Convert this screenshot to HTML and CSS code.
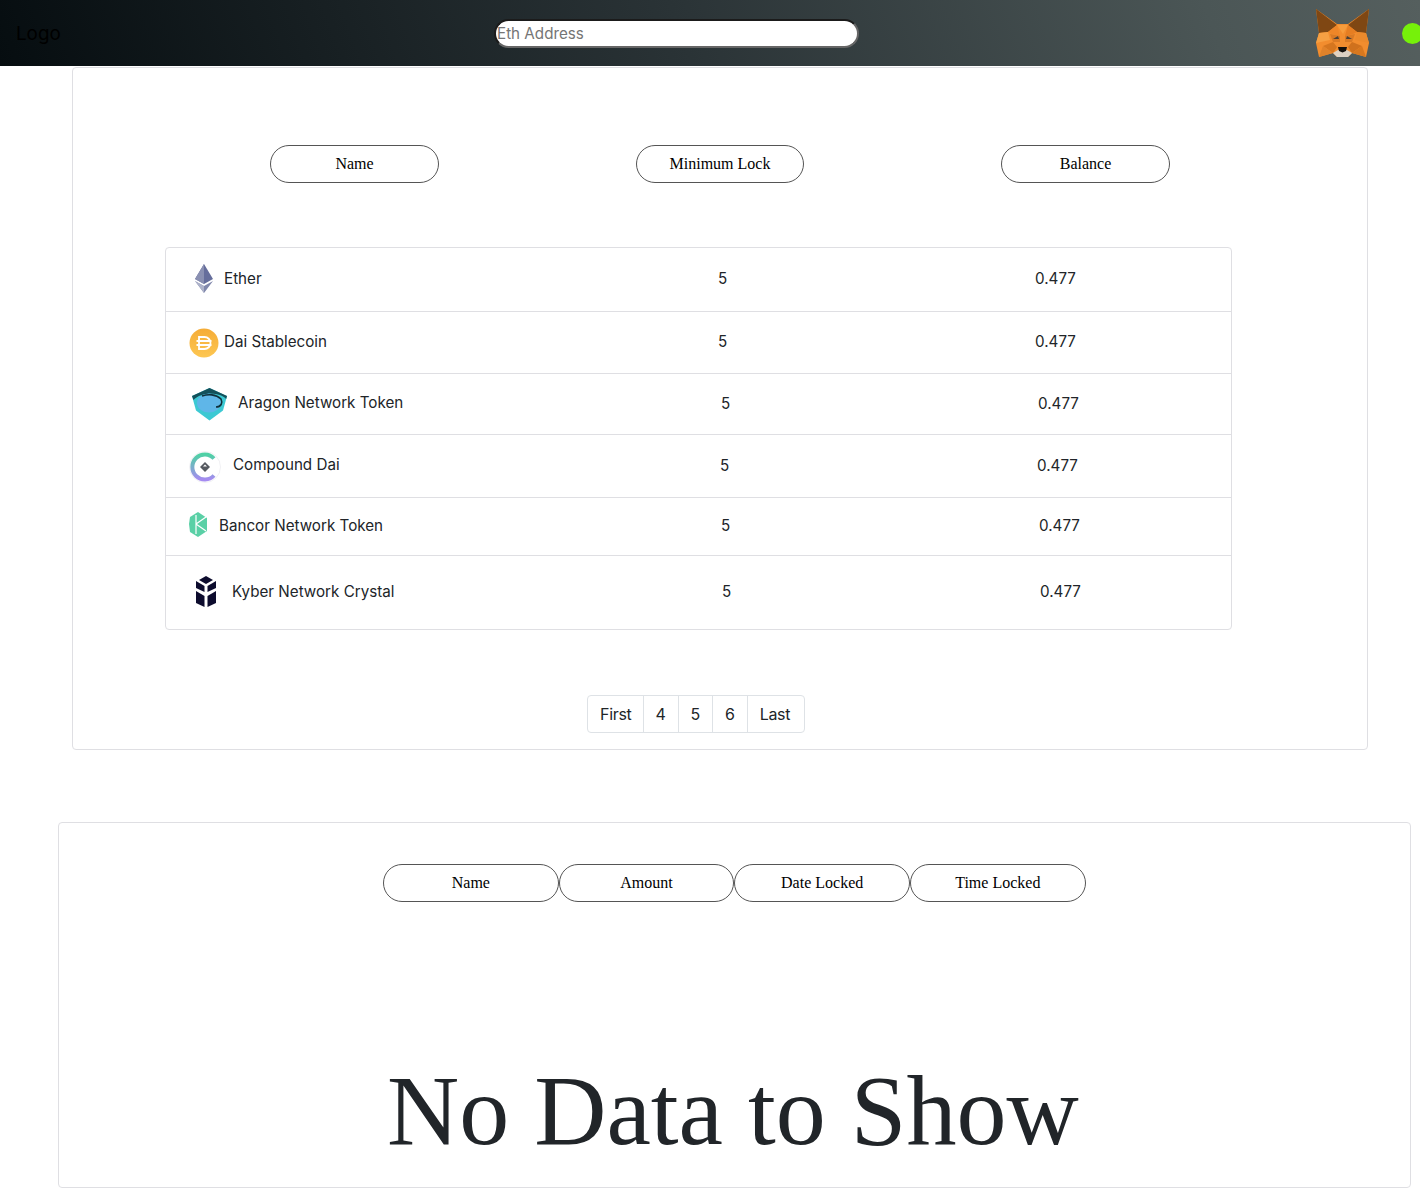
FILE: index.html
```html
<!DOCTYPE html>
<html lang="en">
<head>
  <meta charset="UTF-8">
  <title>Token Lock</title>
  <link rel="stylesheet" href="styles.css">
</head>
<body>
  <header class="topbar">
    <div class="logo">Logo</div>
    <input class="address" type="text" placeholder="Eth Address">
    <svg class="fox" viewBox="0 0 53 48" aria-hidden="true">
      <polygon points="0,0 21,15 32,15 53,0 50,24 53,34 50,48 36,44 32,48 21,48 17,44 3,48 0,34 3,24" fill="#f28d2e"/>
      <polygon points="0,0 21,16 12,23 3,24" fill="#7f4713"/>
      <polygon points="53,0 32,16 41,23 50,24" fill="#7f4713"/>
      <polygon points="21,16 32,16 27,25" fill="#f79c3c"/>
      <polygon points="12,23 21,16 24,27 16,25" fill="#ee8628"/>
      <polygon points="41,23 32,16 29,27 37,25" fill="#e67e22"/>
      <polygon points="14,25 24,27 24,33 17,33" fill="#d97a25"/>
      <polygon points="39,25 29,27 29,33 36,33" fill="#d97a25"/>
      <polygon points="17,30 22,27 23,30" fill="#4c4036"/>
      <polygon points="36,30 31,27 30,30" fill="#4c4036"/>
      <polygon points="3,24 12,23 14,31 0,34" fill="#f6a043"/>
      <polygon points="50,24 41,23 39,31 53,34" fill="#ec8a2c"/>
      <polygon points="7,37 17,33 21,38 17,44" fill="#d5761f"/>
      <polygon points="46,37 36,33 32,38 36,44" fill="#cf711d"/>
      <polygon points="3,48 7,37 17,44" fill="#e0822a"/>
      <polygon points="50,48 46,37 36,44" fill="#d8781f"/>
      <polygon points="17,44 22,41 31,41 36,44 32,48 21,48" fill="#ddd1c3"/>
      <polygon points="22,38 31,38 30,42 26.500,43.500 23,42" fill="#15110d"/>
    </svg>
    <span class="status"></span>
  </header>

  <section class="panel tokens">
    <div class="pills">
      <button class="pill">Name</button>
      <button class="pill">Minimum Lock</button>
      <button class="pill">Balance</button>
    </div>

    <div class="list">
      <div class="row row-ether">
        <div class="name">
          <svg class="icon" viewBox="0 0 30 30" aria-hidden="true">
            <polygon points="15,0 24,15 15,20 6,15" fill="#666e9c"/>
            <polygon points="15,0 15,20 6,15" fill="#8a90b2"/>
            <polygon points="6,17 15,22 24,17 15,29" fill="#8188ac"/>
            <polygon points="6,17 15,22 15,29" fill="#aeb3ca"/>
          </svg>
          <span>Ether</span>
        </div>
        <div class="cell">5</div>
        <div class="cell">0.477</div>
      </div>
      <div class="row row-dai">
        <div class="name">
          <svg class="icon" viewBox="0 0 30 30" aria-hidden="true">
            <defs><linearGradient id="daiFill" x1="0" y1="0" x2="0" y2="1"><stop offset="0" stop-color="#f5ac37"/><stop offset="1" stop-color="#fdc752"/></linearGradient></defs>
            <circle cx="15" cy="15" r="14.5" fill="url(#daiFill)"/>
            <path d="M10 9h5.500a6 6 0 0 1 0 12H10zM7.500 13h15M7.500 17h15" fill="none" stroke="#fff" stroke-width="1.800"/>
          </svg>
          <span>Dai Stablecoin</span>
        </div>
        <div class="cell">5</div>
        <div class="cell">0.477</div>
      </div>
      <div class="row row-aragon">
        <div class="name">
          <svg class="icon" viewBox="0 0 36 33" aria-hidden="true">
            <path d="M17.500 0L35 8l-4 14.500-13.500 10L4 22.500 0 8z" fill="#3cc9d3"/>
            <path d="M17.500 0L35 8l-.8 3C28 4 9 4 1.500 12L0 8z" fill="#14505a"/>
            <ellipse cx="17" cy="15" rx="12" ry="9.500" fill="#5fb6e8"/>
            <path d="M10 8c6-2 14-2 19 3 2 4 0 8-5 8" fill="none" stroke="#10303a" stroke-width="1.600"/>
          </svg>
          <span>Aragon Network Token</span>
        </div>
        <div>5</div>
        <div>0.477</div>
      </div>
      <div class="row row-compound">
        <div class="name">
          <svg class="icon" viewBox="0 0 32 32" aria-hidden="true">
            <defs><linearGradient id="cdaiRing" x1="0" y1="0" x2="0" y2="1"><stop offset="0" stop-color="#4fd1a5"/><stop offset="1" stop-color="#a58bf0"/></linearGradient></defs>
            <circle cx="16" cy="16" r="15.500" fill="#fff" stroke="#f1f1f4"/>
            <path d="M25 7.500A12.500 12.500 0 1 0 25 24.500" fill="none" stroke="url(#cdaiRing)" stroke-width="4"/>
            <polygon points="16,11 21,16 16,21 11,16" fill="#55595f"/>
            <polygon points="16,13.500 18,15.500 14,15.500" fill="#fff"/>
          </svg>
          <span>Compound Dai</span>
        </div>
        <div>5</div>
        <div>0.477</div>
      </div>
      <div class="row row-bancor">
        <div class="name">
          <svg class="icon" viewBox="0 0 19 25" aria-hidden="true">
            <polygon points="9,0 18,6 18,19 9,25 1,20 0,12 1,5" fill="#5ad0a6"/>
            <path d="M7 3v19M7 12l10-7M7 12l10 7" fill="none" stroke="#fff" stroke-width="1.200"/>
          </svg>
          <span>Bancor Network Token</span>
        </div>
        <div class="cell">5</div>
        <div class="cell">0.477</div>
      </div>
      <div class="row row-kyber">
        <div class="name">
          <svg class="icon" viewBox="0 0 22 32" aria-hidden="true">
            <polygon points="11,0 18,4 11,8 4,4" fill="#0d0c2e"/>
            <polygon points="1,5 9.500,10 9.500,16 1,12" fill="#0d0c2e"/>
            <polygon points="21,5 12.500,10 12.500,16 21,12" fill="#0d0c2e"/>
            <polygon points="1,15 9.500,20 9.500,31 1,27" fill="#0d0c2e"/>
            <polygon points="21,15 12.500,20 12.500,31 21,27" fill="#0d0c2e"/>
          </svg>
          <span>Kyber Network Crystal</span>
        </div>
        <div class="cell">5</div>
        <div class="cell">0.477</div>
      </div>
    </div>

    <nav class="pager">
      <a>First</a>
      <a>4</a>
      <a>5</a>
      <a>6</a>
      <a>Last</a>
    </nav>
  </section>

  <section class="panel locked">
    <div class="locked-pills">
      <button class="pill">Name</button>
      <button class="pill">Amount</button>
      <button class="pill">Date Locked</button>
      <button class="pill">Time Locked</button>
    </div>
    <h1 class="empty">No Data to Show</h1>
  </section>
</body>
</html>
```

FILE: styles.css
```css
html, body {
  margin: 0;
  padding: 0;
}

body {
  font-family: Inter, "Liberation Sans", sans-serif;
  font-size: 15.2px;
  color: #212529;
  background: #fff;
  height: 1188px;
  overflow: hidden;
}

.topbar {
  display: flex;
  align-items: center;
  height: 66px;
  box-sizing: border-box;
  padding-left: 16px;
  background: linear-gradient(70deg, #060d10 0%, #2a3336 48%, #4b5656 85%, #555f5e 100%);
  overflow: hidden;
}

.logo {
  flex: none;
  width: 478px;
  font-size: 18.800px;
  color: #000;
}

.address {
  flex: none;
  width: 365px;
  height: 29px;
  box-sizing: border-box;
  padding: 0 1px;
  border: 2px solid #1b1b1b;
  border-bottom-color: #666;
  border-right-color: #666;
  border-radius: 15px;
  background: #fff;
  font-family: Inter, "Liberation Sans", sans-serif;
  font-size: 15.2px;
}

.address::placeholder {
  color: #757575;
}

.fox {
  flex: none;
  width: 53px;
  height: 48px;
  margin-left: 457px;
}

.status {
  flex: none;
  width: 21px;
  height: 21px;
  margin-left: 33px;
  border-radius: 50%;
  background: #76f10a;
}

.panel {
  box-sizing: border-box;
  border: 1px solid #dfdfe3;
  border-radius: 4px;
  background: #fff;
}

.tokens {
  width: 1296px;
  height: 683px;
  margin: 1px 0 0 72px;
  padding: 77px 92px 0;
}

.pills {
  display: grid;
  grid-template-columns: 169px 168px 169px;
  justify-content: space-between;
  width: 900px;
  margin-left: 105px;
}

.pill {
  height: 38px;
  padding: 0;
  border: 1px solid #555;
  border-radius: 19px;
  background: #fff;
  font-family: "Liberation Serif", serif;
  font-size: 16px;
  color: #000;
}

.list {
  width: 1067px;
  box-sizing: border-box;
  margin-top: 64px;
  border: 1px solid #dfdfe3;
  border-radius: 4px;
}

.row {
  display: grid;
  align-items: center;
  box-sizing: border-box;
  border-bottom: 1px solid #dfdfe3;
  line-height: 20px;
}

.row:last-child {
  border-bottom: 0;
}

.name {
  display: flex;
  align-items: center;
}

.name span,
.cell {
  margin-bottom: 2px;
}

.icon {
  display: block;
  flex: none;
}

.row-ether { height: 64px; grid-template-columns: 552px 317px 1fr; }
.row-dai { height: 62px; grid-template-columns: 552px 317px 1fr; }
.row-aragon { height: 61px; grid-template-columns: 555px 317px 1fr; }
.row-compound { height: 63px; grid-template-columns: 554px 317px 1fr; }
.row-bancor { height: 58px; grid-template-columns: 555px 318px 1fr; }
.row-kyber { height: 73px; grid-template-columns: 556px 318px 1fr; }

.row-ether .icon { width: 30px; height: 30px; margin: 0 5px 2px 23px; }
.row-dai .icon { width: 30px; height: 30px; margin: 0 5px 0 23px; }
.row-aragon .icon { width: 36px; height: 33px; margin: 0 10px 0 26px; }
.row-compound .icon { width: 32px; height: 32px; margin: 2px 12px 0 23px; }
.row-bancor .icon { width: 19px; height: 25px; margin: 0 11px 4px 23px; }
.row-kyber .icon { width: 22px; height: 32px; margin: 0 15px 2px 29px; }

.pager {
  display: flex;
  width: max-content;
  margin: 65px 0 0 422px;
  border: 1px solid #dee2e6;
  border-radius: 4px;
  font-size: 16px;
  letter-spacing: -0.3px;
  color: #212529;
}

.pager a {
  padding: 0 12px;
  line-height: 36px;
  border-right: 1px solid #dee2e6;
}

.pager a:first-child {
  padding-right: 11px;
}

.pager a:last-child {
  padding-right: 14px;
  border-right: 0;
}

.locked {
  width: 1353px;
  height: 366px;
  margin: 72px 0 0 58px;
  padding-top: 41px;
}

.locked-pills {
  display: grid;
  grid-template-columns: repeat(4, 175.67px);
  margin-left: 324px;
}

.empty {
  margin: 151px 0 0 328px;
  font-family: "Liberation Serif", serif;
  font-size: 100px;
  font-weight: 400;
  line-height: 115px;
  white-space: nowrap;
}
```
